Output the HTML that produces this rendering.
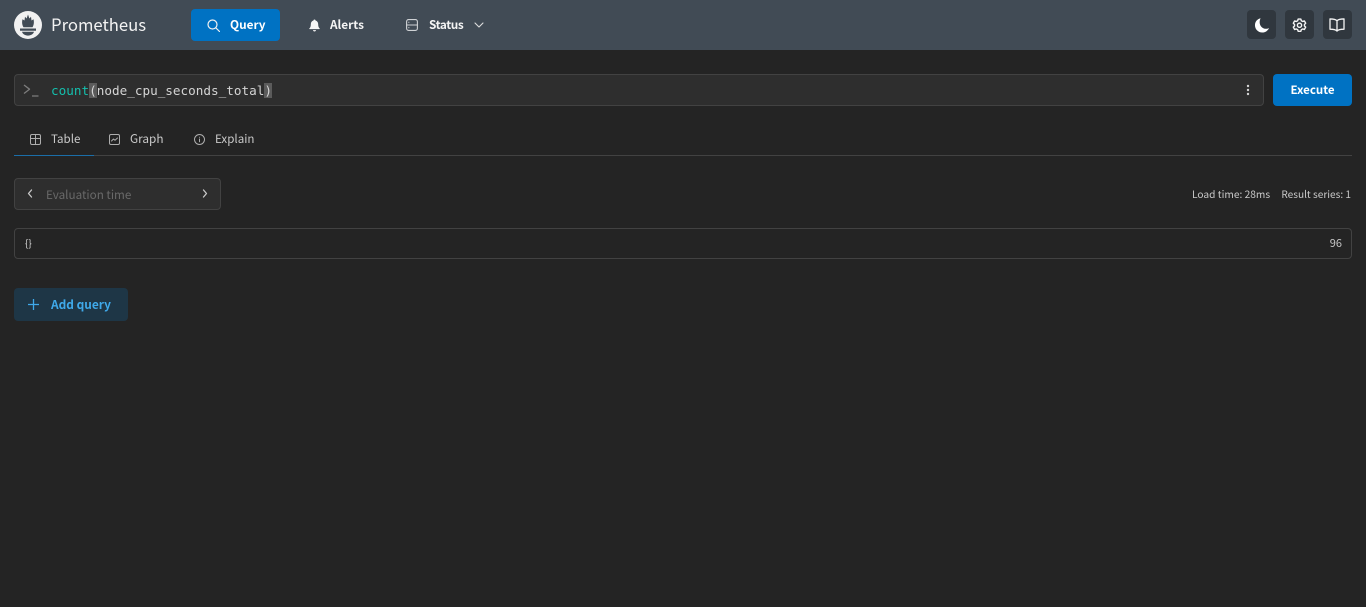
<!DOCTYPE html>
<html lang="en"><head><meta charset="utf-8"><title>Prometheus</title>
<style>
html,body{margin:0;padding:0;background:#242424;width:1366px;height:607px;overflow:hidden}
body{font-family:"Noto Sans CJK SC","Liberation Sans",sans-serif;color:#c9c9c9;position:relative}
.a{position:absolute;white-space:nowrap}
svg{position:absolute;fill:none;stroke:currentColor;stroke-width:2;stroke-linecap:round;stroke-linejoin:round}
.box{position:absolute;box-sizing:border-box;border:1px solid #424242;border-radius:4px}
.ib{position:absolute;top:10px;width:29px;height:29px;background:#30373e;border-radius:4px;color:#f4f4f4}
</style></head><body>
<div class="a" style="left:0;top:0;width:1366px;height:50px;background:#414b55"></div>

<svg style="left:14px;top:11px;stroke:none;fill:#f1f1f1" width="28" height="28" viewBox="0 0 28 28"><path fill-rule="evenodd" d="M14 0a14 14 0 1 1 0 28a14 14 0 0 1 0-28zM14 3.500L15.400 7.500L17 5.800L17.500 9.500L19.500 8.300C20.200 11 20 14 18.500 16.300H9.500C8 14 7.800 11 8.500 8.300L10.500 9.500L11 5.800L12.600 7.500zM6 17.500v2.200h16v-2.200zM8 20.800C8.500 23 11 24.600 14 24.600s5.500-1.600 6-3.800z"/></svg>
<div class="a" style="left:51px;top:12px;font-size:16.700px;line-height:24px;color:#f3f3f3">Prometheus</div>

<div class="a" style="left:191px;top:9px;width:89px;height:32px;background:#0072c3;border-radius:4px"></div>
<svg style="left:207px;top:19px;color:#f2f2f2;stroke-width:1.200" width="13" height="13" viewBox="0 0 13 13"><circle cx="5.500" cy="5.500" r="4.500"/><path d="M9 9l3.500 3.500"/></svg>
<div class="a" style="left:230px;top:15.500px;font-size:11.800px;line-height:18px;font-weight:700;color:#fff">Query</div>

<svg style="left:309px;top:18.500px;stroke:none;fill:#f6f6f6" width="11" height="13" viewBox="0 0 12 14"><path d="M6 0.500c.7 0 1 .4 1.100 1C9 2 10 3.600 10 5.500c0 2.500.6 3.800 1.600 4.700c.3.300.1.800-.3.800H.7c-.4 0-.6-.5-.3-.8C1.400 9.300 2 8 2 5.500C2 3.600 3 2 4.900 1.500C5 .9 5.300.5 6 .5zM4.300 12h3.400c-.2.900-.9 1.500-1.700 1.500s-1.500-.6-1.700-1.500z"/></svg>
<div class="a" style="left:330px;top:15.500px;font-size:11.800px;line-height:18px;font-weight:700;color:#f4f4f4">Alerts</div>

<svg style="left:406px;top:19px;color:#cfd2d5;stroke-width:1.100" width="12" height="12" viewBox="0 0 12 12"><rect x=".6" y=".6" width="10.800" height="10.800" rx="2"/><path d="M.6 6h10.800M2.800 3.300h.1M2.800 8.700h.1"/></svg>
<div class="a" style="left:429px;top:15.500px;font-size:11.800px;line-height:18px;font-weight:700;color:#f4f4f4;letter-spacing:-.4px">Status</div>
<svg style="left:474px;top:21px;color:#dedede;stroke-width:1.100" width="10" height="8" viewBox="0 0 10 8"><path d="M1 2l4 4l4-4"/></svg>

<div class="ib" style="left:1247px"><svg style="left:7px;top:8px;stroke:none;fill:#fff" width="16" height="15" viewBox="0 0 16 16"><path d="M6.500.3C3 1 .5 4 .5 7.700c0 4.300 3.500 7.800 7.800 7.800c3.200 0 5.900-1.900 7.200-4.700c-.9.500-2 .7-3.100.7c-3.800 0-6.900-3.100-6.900-6.900c0-1.500.3-3 1-4.300z"/></svg></div>
<div class="ib" style="left:1285px"><svg style="left:7px;top:7.500px;stroke-width:1.600" width="15" height="15" viewBox="0 0 17 17"><path d="M7 1.200h3l.6 1.900l1.500.8l1.900-.6l1.500 2.600l-1.400 1.400v1.700l1.400 1.400l-1.500 2.600l-1.900-.6l-1.500.8l-.6 1.900H7l-.6-1.900l-1.500-.8l-1.900.6l-1.500-2.600L2.900 9V7.300L1.500 5.900L3 3.300l1.900.6l1.500-.8z"/><circle cx="8.500" cy="8.200" r="2.400"/></svg></div>
<div class="ib" style="left:1323px"><svg style="left:6px;top:8px;stroke-width:1.400" width="16" height="14" viewBox="0 0 17 15"><path d="M8.500 3C7.300 1.700 5.500 1 1 1v11c4.500 0 6.300.7 7.500 2c1.200-1.300 3-2 7.500-2V1c-4.500 0-6.300.7-7.500 2zM8.500 3v11"/></svg></div>

<div class="box" style="left:14px;top:74px;width:1250px;height:32px;background:#2e2e2e"></div>
<svg style="left:23px;top:84px;color:#7d7d7d;stroke-width:1.300;stroke-linecap:butt" width="16" height="13" viewBox="0 0 16 13"><path d="M1 1l5.500 4.200L1 9.500M9 12h6.500"/></svg>
<div class="a" style="left:51px;top:82px;font-family:'DejaVu Sans Mono',monospace;font-size:12.660px;line-height:18px;color:#d4d4d4"><span style="color:#14bfad">count</span><span style="background:#5b5b5b">(</span>node_cpu_seconds_total<span style="background:#5b5b5b">)</span></div>
<svg style="left:1246px;top:84px;stroke:none;fill:#d4d4d4" width="4" height="12" viewBox="0 0 4 12"><circle cx="2" cy="2" r="1.200"/><circle cx="2" cy="6" r="1.200"/><circle cx="2" cy="10" r="1.200"/></svg>
<div class="a" style="left:1273px;top:74px;width:79px;height:32px;background:#0072c3;border-radius:4px;text-align:center;font-size:11.500px;font-weight:700;line-height:33px;color:#fff">Execute</div>

<div class="a" style="left:14px;top:155px;width:1338px;height:1px;background:#424242"></div>
<div class="a" style="left:14px;top:155px;width:80px;height:1px;background:#1b6ea8"></div>
<svg style="left:30px;top:134px;color:#aeaeae;stroke-width:1" width="11" height="11" viewBox="0 0 11 11"><rect x=".5" y=".5" width="10" height="10" rx="1.500"/><path d="M.5 4.500h10M5.500 .5v10"/></svg>
<div class="a" style="left:51px;top:131px;font-size:11.600px;line-height:17px;color:#c9c9c9">Table</div>
<svg style="left:109px;top:134px;color:#aeaeae;stroke-width:1" width="11" height="11" viewBox="0 0 11 11"><rect x=".5" y=".5" width="10" height="10" rx="1.500"/><path d="M2.500 7l2-2l1.500 1.300L8.500 4"/></svg>
<div class="a" style="left:130px;top:130px;font-size:11.800px;line-height:17px;color:#c9c9c9">Graph</div>
<svg style="left:194px;top:134px;color:#aeaeae;stroke-width:1" width="11" height="11" viewBox="0 0 11 11"><circle cx="5.500" cy="5.500" r="5"/><path d="M5.500 5v2.800M5.500 3.200h.01"/></svg>
<div class="a" style="left:215px;top:131px;font-size:11.600px;line-height:17px;color:#c9c9c9">Explain</div>

<div class="box" style="left:14px;top:178px;width:207px;height:32px;background:#2e2e2e"></div>
<svg style="left:27px;top:189px;color:#c9c9c9;stroke-width:1.300" width="6" height="9" viewBox="0 0 6 9"><path d="M4.500 1L1.500 4.500l3 3.500"/></svg>
<div class="a" style="left:46px;top:186px;font-size:11.700px;line-height:17px;color:#696969">Evaluation time</div>
<svg style="left:202px;top:189px;color:#c9c9c9;stroke-width:1.300" width="6" height="9" viewBox="0 0 6 9"><path d="M1.500 1l3 3.500l-3 3.500"/></svg>

<div class="a" style="left:1192px;top:186px;font-size:10.200px;line-height:15px;color:#c9c9c9">Load time: 28ms</div>
<div class="a" style="right:15px;top:186px;font-size:10.100px;line-height:15px;color:#c9c9c9">Result series: 1</div>

<div class="box" style="left:14px;top:228px;width:1338px;height:31px"></div>
<div class="a" style="left:25px;top:236px;font-size:10px;line-height:14px;color:#d6d6d6">{}</div>
<div class="a" style="right:24px;top:236px;font-size:11px;line-height:14px;color:#c9c9c9">96</div>

<div class="a" style="left:14px;top:288px;width:114px;height:33px;background:#1e3646;border-radius:4px"></div>
<svg style="left:28px;top:299px;color:#3fa9ea;stroke-width:1.300;stroke-linecap:butt" width="11" height="11" viewBox="0 0 11 11"><path d="M5.500 0v11M0 5.500h11"/></svg>
<div class="a" style="left:51px;top:296px;font-size:11.900px;line-height:17px;font-weight:700;color:#3fa9ea">Add query</div>
</body></html>
